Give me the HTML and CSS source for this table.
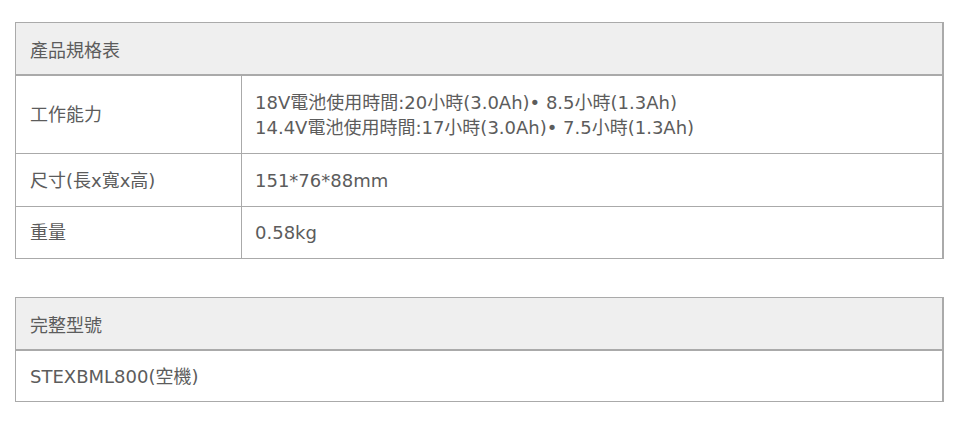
FILE: index.html
```html
<!DOCTYPE html>
<html lang="zh-Hant">
<head>
<meta charset="utf-8">
<link rel="stylesheet" href="styles.css">
</head>
<body>
<div class="page">
  <section class="spec">
    <div class="head">產品規格表</div>
    <div class="row tall">
      <div class="label">工作能力</div>
      <div class="value">18V電池使用時間:20小時(3.0Ah)• 8.5小時(1.3Ah)<br>14.4V電池使用時間:17小時(3.0Ah)• 7.5小時(1.3Ah)</div>
    </div>
    <div class="row">
      <div class="label">尺寸(長x寬x高)</div>
      <div class="value">151*76*88mm</div>
    </div>
    <div class="row last">
      <div class="label">重量</div>
      <div class="value">0.58kg</div>
    </div>
  </section>
  <section class="spec">
    <div class="head">完整型號</div>
    <div class="row single">
      <div class="value first">STEXBML800(空機)</div>
    </div>
  </section>
</div>
</body>
</html>
```
FILE: styles.css
```css
html, body {
  margin: 0;
  padding: 0;
  background: #fff;
}
.page {
  padding: 22px 0 0 15px;
  display: flex;
  flex-direction: column;
  gap: 38px;
  width: 929px;
  font-family: "DejaVu Sans", "Noto Sans CJK TC", sans-serif;
  font-size: 18px;
  color: #5c5c5c;
}
.spec {
  border: 1px solid #aaa;
  border-right-width: 2px;
}
.head {
  background: #efefef;
  height: 51px;
  border-bottom: 2px solid #aaa;
  display: flex;
  align-items: center;
  padding-left: 14px;
}
.row {
  display: grid;
  grid-template-columns: 226px 1fr;
  border-top: 1px solid #aaa;
  height: 52px;
}
.head + .row {
  border-top: none;
}
.row.tall {
  height: 77px;
}
.row.last {
  height: 51px;
}
.row.single {
  grid-template-columns: 1fr;
  height: 50px;
}
.label, .value {
  display: flex;
  align-items: center;
  padding-left: 14px;
  line-height: 25px;
}
.value {
  padding-left: 13px;
}
.value.first {
  padding-left: 14px;
}
.label {
  border-right: 1px solid #aaa;
}
```
